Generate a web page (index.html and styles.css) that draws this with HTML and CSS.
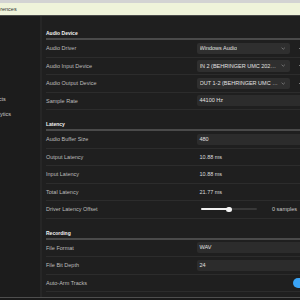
FILE: index.html
```html
<!DOCTYPE html>
<html lang="en">
<head>
    <meta charset="UTF-8">
    <meta name="viewport" content="width=device-width, initial-scale=1.0">
    <title>Preferences</title>
    <link rel="stylesheet" href="styles.css">
</head>
<body>

    <div class="window">
        <div class="titlebar">Preferences</div>

        <div class="main-area">
            <!-- Left navigation -->
            <aside class="sidebar">
                <div class="sidebar-item">Effects</div>
                <div class="sidebar-item">Analytics</div>
            </aside>

            <main class="content">
                <!-- Audio device -->
                <div class="section-title">Audio Device</div>
                <div class="row">
                    <span class="label">Audio Driver</span>
                    <div class="control">
                        <div class="select"><span class="select-text">Windows Audio</span><svg class="chevron" viewBox="0 0 6 4"><path d="M0.8 0.9 L3 3 L5.2 0.9" /></svg></div>
                        <span class="more-dot"></span>
                    </div>
                </div>
                <div class="row">
                    <span class="label">Audio Input Device</span>
                    <div class="control">
                        <div class="select"><span class="select-text">IN 2 (BEHRINGER UMC 202HD 192k)</span><svg class="chevron" viewBox="0 0 6 4"><path d="M0.8 0.9 L3 3 L5.2 0.9" /></svg></div>
                        <span class="more-dot"></span>
                    </div>
                </div>
                <div class="row">
                    <span class="label">Audio Output Device</span>
                    <div class="control">
                        <div class="select"><span class="select-text">OUT 1-2 (BEHRINGER UMC 202HD 192k)</span><svg class="chevron" viewBox="0 0 6 4"><path d="M0.8 0.9 L3 3 L5.2 0.9" /></svg></div>
                        <span class="more-dot"></span>
                    </div>
                </div>
                <div class="row">
                    <span class="label">Sample Rate</span>
                    <div class="control">
                        <div class="input">44100 Hz</div>
                    </div>
                </div>

                <!-- Latency -->
                <div class="section-title">Latency</div>
                <div class="row">
                    <span class="label">Audio Buffer Size</span>
                    <div class="control">
                        <div class="input">480</div>
                    </div>
                </div>
                <div class="row">
                    <span class="label">Output Latency</span>
                    <span class="value">10.88 ms</span>
                </div>
                <div class="row">
                    <span class="label">Input Latency</span>
                    <span class="value">10.88 ms</span>
                </div>
                <div class="row">
                    <span class="label">Total Latency</span>
                    <span class="value">21.77 ms</span>
                </div>
                <div class="row">
                    <span class="label">Driver Latency Offset</span>
                    <div class="control">
                        <div class="slider">
                            <div class="slider-fill" style="width: 50%"></div>
                            <div class="slider-thumb" style="left: 50%"></div>
                        </div>
                        <span class="slider-value">0 samples</span>
                    </div>
                </div>

                <!-- Recording -->
                <div class="section-title">Recording</div>
                <div class="row">
                    <span class="label">File Format</span>
                    <div class="control">
                        <div class="input">WAV</div>
                    </div>
                </div>
                <div class="row">
                    <span class="label">File Bit Depth</span>
                    <div class="control">
                        <div class="input">24</div>
                    </div>
                </div>
                <div class="row">
                    <span class="label">Auto-Arm Tracks</span>
                    <div class="control">
                        <div class="toggle on"><span class="toggle-knob"></span></div>
                    </div>
                </div>
            </main>
        </div>
    </div>

</body>
</html>
```

FILE: styles.css
```css
* {
    margin: 0;
    padding: 0;
    box-sizing: border-box;
}

body {
    font-family: 'Liberation Sans', Arial, sans-serif;
    font-size: 5.5px;
    background-color: #1a1a1a;
    color: #bdbdbd;
    overflow: hidden;
}

.window {
    margin-left: -20px;
    width: 380px;
    height: 298px;
    display: flex;
    flex-direction: column;
    background-color: #1f1f1f;
    border-bottom: 1px solid #4e4e4e;
    overflow: hidden;
}

.titlebar {
    height: 16px;
    border-top: 3px solid #d3d3d3;
    border-bottom: 1px solid #4a4a4a;
    background-color: #eff3da;
    color: #333;
    padding-left: 7px;
    line-height: 13px;
}

.main-area {
    display: flex;
    flex: 1;
}

/* Sidebar */
.sidebar {
    width: 62px;
    flex-shrink: 0;
    background-color: #1c1c1c;
    border-right: 2px solid #262626;
    padding-top: 76px;
    color: #c8c8c8;
}

.sidebar-item {
    height: 14.5px;
    line-height: 14.5px;
    padding-left: 9px;
    white-space: nowrap;
}

/* Content */
.content {
    flex: 1;
    padding: 3px 0 0 4px;
}

.section-title {
    padding-top: 11px;
    height: 21px;
    line-height: 7px;
    border-bottom: 2px solid #4a4a4a;
    color: #f2f2f2;
    font-weight: bold;
    font-size: 5px;
}

.row {
    display: grid;
    grid-template-columns: 151px 1fr;
    align-items: center;
    height: 17.5px;
    border-bottom: 1px solid #2c2c2c;
}

.label {
    white-space: nowrap;
}

.control {
    display: flex;
    align-items: center;
}

.select {
    width: 92.5px;
    height: 11.5px;
    background-color: #2f2f2f;
    border-radius: 2px;
    display: flex;
    align-items: center;
    justify-content: space-between;
    padding: 0 4px 0 2.5px;
    color: #e0e0e0;
}

.select-text {
    white-space: nowrap;
    overflow: hidden;
    text-overflow: ellipsis;
    margin-right: 1.5px;
}

.chevron {
    width: 4.5px;
    height: 3px;
    flex-shrink: 0;
}

.chevron path {
    fill: none;
    stroke: #9a9a9a;
    stroke-width: 0.8;
}

.more-dot {
    width: 1.4px;
    height: 1.4px;
    border-radius: 50%;
    background-color: #9a9a9a;
    margin-left: 9px;
}

.input {
    width: 140px;
    height: 11.3px;
    line-height: 11.3px;
    background-color: #2c2c2c;
    border-radius: 2px;
    padding-left: 2.5px;
    color: #e0e0e0;
}

.value {
    padding-left: 2.5px;
    color: #dcdcdc;
}

/* Slider */
.slider {
    position: relative;
    width: 56px;
    height: 2px;
    margin-left: 4px;
    background-color: #383838;
    border-radius: 1px;
}

.slider-fill {
    height: 100%;
    background-color: #f0f0f0;
    border-radius: 1px;
}

.slider-thumb {
    position: absolute;
    top: 50%;
    width: 5.5px;
    height: 5.5px;
    margin: -2.75px 0 0 -2.75px;
    border-radius: 50%;
    background-color: #f4f4f4;
}

.slider-value {
    margin-left: 15px;
    color: #c8c8c8;
    white-space: nowrap;
}

/* Toggle */
.toggle {
    width: 18px;
    height: 10px;
    margin-left: 96px;
    border-radius: 5px;
    background-color: #3a3a3a;
    display: flex;
    align-items: center;
    padding: 0 1.5px;
}

.toggle.on {
    background-color: #3aa3f5;
    justify-content: flex-end;
}

.toggle-knob {
    width: 7px;
    height: 7px;
    border-radius: 50%;
    background-color: #fff;
}
```
